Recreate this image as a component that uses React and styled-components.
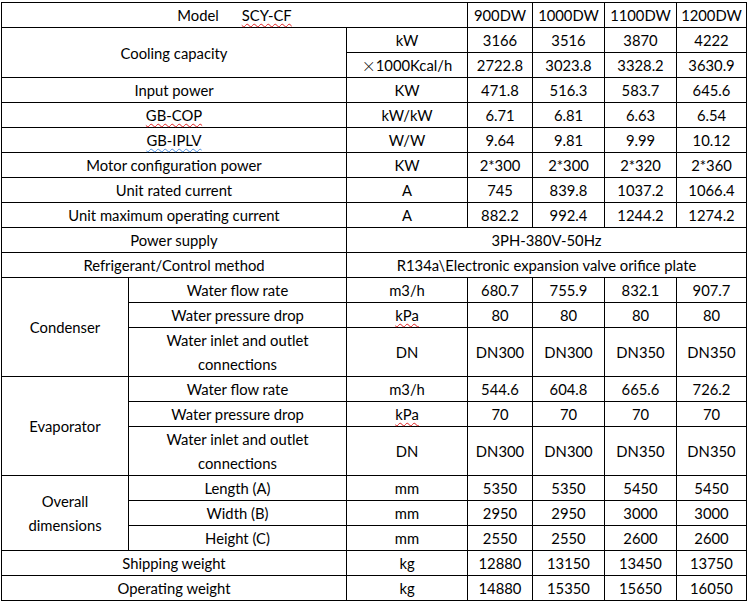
import React from "react";
import styled, { createGlobalStyle } from "styled-components";

const GlobalStyle = createGlobalStyle`
  body {
    margin: 0;
    padding: 2px 0 0 1px;
    background: #fff;
  }
`;

const models = ["900DW", "1000DW", "1100DW", "1200DW"];

// simple rows: label spans the two left columns
const plainRows = [
  { label: "Input power", unit: "KW", values: ["471.8", "516.3", "583.7", "645.6"] },
  { label: "GB-COP", mark: "red", unit: "kW/kW", values: ["6.71", "6.81", "6.63", "6.54"] },
  { label: "GB-IPLV", mark: "blue", unit: "W/W", values: ["9.64", "9.81", "9.99", "10.12"] },
  { label: "Motor configuration power", unit: "KW", values: ["2*300", "2*300", "2*320", "2*360"] },
  { label: "Unit rated current", unit: "A", values: ["745", "839.8", "1037.2", "1066.4"] },
  { label: "Unit maximum operating current", unit: "A", values: ["882.2", "992.4", "1244.2", "1274.2"] },
];

const groups = [
  {
    name: "Condenser",
    rows: [
      { label: "Water flow rate", unit: "m3/h", values: ["680.7", "755.9", "832.1", "907.7"] },
      { label: "Water pressure drop", unit: "kPa", unitMark: true, values: ["80", "80", "80", "80"] },
      { label: "Water inlet and outlet", label2: "connections", unit: "DN", values: ["DN300", "DN300", "DN350", "DN350"] },
    ],
  },
  {
    name: "Evaporator",
    rows: [
      { label: "Water flow rate", unit: "m3/h", values: ["544.6", "604.8", "665.6", "726.2"] },
      { label: "Water pressure drop", unit: "kPa", unitMark: true, values: ["70", "70", "70", "70"] },
      { label: "Water inlet and outlet", label2: "connections", unit: "DN", values: ["DN300", "DN300", "DN350", "DN350"] },
    ],
  },
  {
    name: "Overall",
    name2: "dimensions",
    rows: [
      { label: "Length (A)", unit: "mm", values: ["5350", "5350", "5450", "5450"] },
      { label: "Width (B)", unit: "mm", values: ["2950", "2950", "3000", "3000"] },
      { label: "Height (C)", unit: "mm", values: ["2550", "2550", "2600", "2600"] },
    ],
  },
];

const weights = [
  { label: "Shipping weight", unit: "kg", values: ["12880", "13150", "13450", "13750"] },
  { label: "Operating weight", unit: "kg", values: ["14880", "15350", "15650", "16050"] },
];

function Values({ values }) {
  return values.map((v, i) => <Cell key={i}>{v}</Cell>);
}

export default function App() {
  return (
    <>
      <GlobalStyle />
      <Sheet>
        <colgroup>
          <col style={{ width: 127 }} />
          <col style={{ width: 218 }} />
          <col style={{ width: 121 }} />
          <col style={{ width: 65 }} />
          <col style={{ width: 72 }} />
          <col style={{ width: 72 }} />
          <col style={{ width: 70 }} />
        </colgroup>
        <tbody>
          <Row>
            <Cell colSpan={3}>
              Model<Mark $tone="red" $gap>SCY-CF</Mark>
            </Cell>
            {models.map((m) => (
              <Cell key={m}>{m}</Cell>
            ))}
          </Row>
          <Row>
            <Cell colSpan={2} rowSpan={2}>Cooling capacity</Cell>
            <Cell>kW</Cell>
            <Values values={["3166", "3516", "3870", "4222"]} />
          </Row>
          <Row>
            <Cell>
              <Times>×</Times>1000Kcal/h
            </Cell>
            <Values values={["2722.8", "3023.8", "3328.2", "3630.9"]} />
          </Row>
          {plainRows.map((r) => (
            <Row key={r.label}>
              <Cell colSpan={2}>
                {r.mark ? <Mark $tone={r.mark}>{r.label}</Mark> : r.label}
              </Cell>
              <Cell>{r.unit}</Cell>
              <Values values={r.values} />
            </Row>
          ))}
          <Row>
            <Cell colSpan={2}>Power supply</Cell>
            <Cell colSpan={5}>3PH-380V-50Hz</Cell>
          </Row>
          <Row>
            <Cell colSpan={2}>Refrigerant/Control method</Cell>
            <Cell colSpan={5}>R134a\Electronic expansion valve orifice plate</Cell>
          </Row>
          {groups.map((g) =>
            g.rows.map((r, i) => (
              <Row key={g.name + i} $tall={!!r.label2}>
                {i === 0 && (
                  <Cell rowSpan={g.rows.length}>
                    {g.name}
                    {g.name2 && (
                      <>
                        <br />
                        {g.name2}
                      </>
                    )}
                  </Cell>
                )}
                <Cell>
                  {r.label}
                  {r.label2 && (
                    <>
                      <br />
                      {r.label2}
                    </>
                  )}
                </Cell>
                <Cell>{r.unitMark ? <Mark $tone="red">{r.unit}</Mark> : r.unit}</Cell>
                <Values values={r.values} />
              </Row>
            ))
          )}
          {weights.map((r) => (
            <Row key={r.label}>
              <Cell colSpan={2}>{r.label}</Cell>
              <Cell>{r.unit}</Cell>
              <Values values={r.values} />
            </Row>
          ))}
        </tbody>
      </Sheet>
    </>
  );
}

const Sheet = styled.table`
  border-collapse: collapse;
  table-layout: fixed;
  width: 746px;
  font-family: Lato, "Liberation Sans", sans-serif;
  font-size: 14.8px;
  color: #000;
`;

const Row = styled.tr`
  height: ${({ $tall }) => ($tall ? "49px" : "25px")};
`;

const Cell = styled.td`
  border: 1px solid #000;
  padding: 0;
  text-align: center;
  vertical-align: middle;
  line-height: 24px;
  white-space: nowrap;
`;

const Times = styled.span`
  display: inline-block;
  height: 14px;
  line-height: 14px;
  font-family: "Noto Sans CJK SC", sans-serif;
  font-weight: 300;
  font-size: 14px;
`;

const Mark = styled.span`
  margin-left: ${({ $gap }) => ($gap ? "23px" : "0")};
  text-decoration: underline wavy ${({ $tone }) => ($tone === "blue" ? "#4a8fe0" : "#e02020")};
  text-decoration-thickness: 1px;
  text-underline-offset: 2px;
`;
